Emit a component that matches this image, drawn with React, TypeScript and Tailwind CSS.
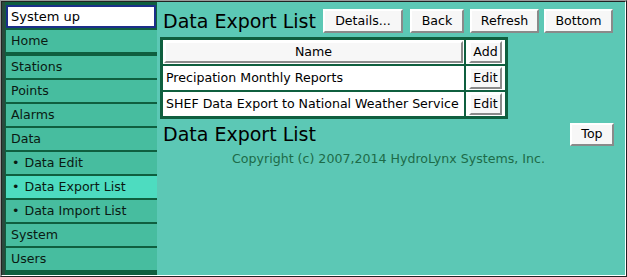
import React from "react";

const font = { fontFamily: '"DejaVu Sans", Verdana, sans-serif' };

function Btn({ children, w, h = 24 }: { children: React.ReactNode; w: number; h?: number }) {
  return (
    <div
      className="flex items-center justify-center bg-[#f7f7f7] border-t-[2px] border-l-[2px] border-b-[2px] border-r-[2px] border-t-white border-l-white border-b-[#8a8a8a] border-r-[#8a8a8a] text-[12.6px] text-black leading-none shrink-0"
      style={{ width: w, height: h }}
    >
      {children}
    </div>
  );
}

const items: { label: string; bullet?: boolean; active?: boolean; thick?: boolean }[] = [
  { label: "Home", thick: true },
  { label: "Stations" },
  { label: "Points" },
  { label: "Alarms" },
  { label: "Data" },
  { label: "Data Edit", bullet: true },
  { label: "Data Export List", bullet: true, active: true },
  { label: "Data Import List", bullet: true },
  { label: "System" },
  { label: "Users" },
];

export default function App() {
  return (
    <div className="w-[627px] h-[277px] overflow-hidden bg-[#5cc8b5]" style={font}>
      <div className="w-full h-full border-t-[1px] border-l-[1px] border-b-[1px] border-r-[1px] border-t-[#9a9a9a] border-l-[#9a9a9a] border-b-[#222] border-r-[#222]">
        <div className="w-full h-full border-t-[1px] border-l-[1px] border-b-[1px] border-r-[1px] border-t-[#222] border-l-[#222] border-b-white border-r-white flex">
          {/* sidebar */}
          <div className="w-[155px] h-full flex flex-col bg-[#0f5f3f] border-l-[3px] border-l-[#2a4a3d] pt-[3px]">
            <div className="h-[23px] mx-[1px] bg-white border-[2px] border-[#1c2f8a] flex items-center pl-[3px] text-[13px] text-black shrink-0">
              System up
            </div>
            <div className="h-[2px] shrink-0" />
            {items.map((it) => (
              <div key={it.label} className="shrink-0">
                <div
                  className={`h-[22px] ml-[1px] flex items-center pl-[5px] text-[12.6px] text-[#0a1a12] ${
                    it.active ? "bg-[#4ddcc0]" : "bg-[#47bd9f]"
                  }`}
                >
                  {it.bullet ? <span className="mr-[5px] ml-[1px]">•</span> : null}
                  {it.label}
                </div>
                <div className={it.thick ? "h-[4px]" : "h-[2px]"} />
              </div>
            ))}
          </div>
          {/* main */}
          <div className="flex-1 h-full flex flex-col bg-[#5cc8b5] pl-[3px] pr-[11px] pt-[5px]">
            <div className="flex items-center h-[28px]">
              <div className="text-[19px] text-black pl-[3px] leading-none w-[163px] shrink-0">Data Export List</div>
              <Btn w={80}>Details...</Btn>
              <div className="w-[7px]" />
              <Btn w={54}>Back</Btn>
              <div className="w-[6px]" />
              <Btn w={69}>Refresh</Btn>
              <div className="w-[5px]" />
              <Btn w={69}>Bottom</Btn>
            </div>
            <div className="mt-[2px] w-[348px] bg-[#0f5f3f] border-[2px] border-[#0f5f3f] flex flex-col gap-[2px] p-[1px]">
              <div className="flex gap-[2px] h-[24px]">
                <div className="w-[301px] bg-white flex items-stretch p-[1px]">
                  <div className="flex-1 flex items-center justify-center bg-[#f7f7f7] border-[2px] border-t-white border-l-white border-b-[#8a8a8a] border-r-[#8a8a8a] text-[12.6px]">
                    Name
                  </div>
                </div>
                <div className="flex-1 bg-white flex items-center justify-center p-[1px]">
                  <Btn w={33} h={22}>Add</Btn>
                </div>
              </div>
              <div className="flex gap-[2px] h-[24px]">
                <div className="w-[301px] bg-white flex items-center pl-[3px] text-[12.6px] text-black">
                  Precipation Monthly Reports
                </div>
                <div className="flex-1 bg-white flex items-center justify-center p-[1px]">
                  <Btn w={33} h={22}>Edit</Btn>
                </div>
              </div>
              <div className="flex gap-[2px] h-[24px]">
                <div className="w-[301px] bg-white flex items-center pl-[3px] text-[12.6px] text-black whitespace-nowrap">
                  SHEF Data Export to National Weather Service
                </div>
                <div className="flex-1 bg-white flex items-center justify-center p-[1px]">
                  <Btn w={33} h={22}>Edit</Btn>
                </div>
              </div>
            </div>
            <div className="flex items-center justify-between h-[26px] mt-[2px]">
              <div className="text-[19px] text-black pl-[3px] leading-none">Data Export List</div>
              <Btn w={44} h={23}>Top</Btn>
            </div>
            <div className="text-center text-[12.6px] text-[#1d6b48] mt-[3px] pl-[3px]">
              Copyright (c) 2007,2014 HydroLynx Systems, Inc.
            </div>
          </div>
        </div>
      </div>
    </div>
  );
}
